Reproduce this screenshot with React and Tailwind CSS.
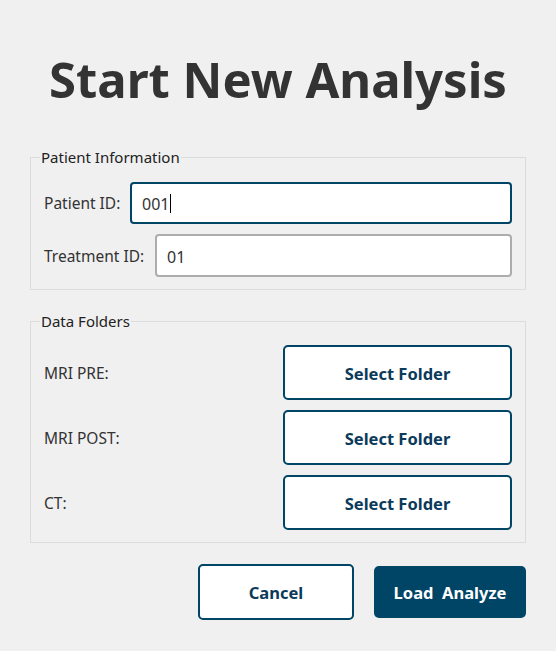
export default function App() {
  const font = { fontFamily: '"Noto Sans", "DejaVu Sans", sans-serif' };
  const btnText = "font-bold text-[16.5px] text-[#0b3a5a] pt-[3px]";
  return (
    <div className="w-[556px] h-[651px] bg-[#f0f0f0] text-[#333333] overflow-hidden" style={font}>
      <div className="flex justify-center pt-[50px] h-[130px]">
        <h1 className="text-[49px] leading-[58px] font-bold text-[#333333]">Start New Analysis</h1>
      </div>

      <fieldset className="mx-[30px] mt-[27px] border border-[#dcdcdc] pl-[13px] pr-[13px] pt-[16px] pb-[12px] relative">
        <legend className="absolute left-[9px] -top-[10px] px-[1px] bg-[#f0f0f0] text-[15px] leading-[19px] text-[#222]">Patient Information</legend>
        <div className="flex items-center h-[42px] mt-[8px]">
          <span className="text-[15.5px] text-[#333] w-[86px] pt-[2px]">Patient ID:</span>
          <div className="flex-1 h-[42px] bg-white border-2 border-[#004466] rounded-[4px] flex items-center pl-[10px] pt-[1px] text-[16px] text-[#333]">
            001<span className="inline-block w-[1px] h-[19px] bg-black ml-[1px]"></span>
          </div>
        </div>
        <div className="flex items-center h-[43px] mt-[10px]">
          <span className="text-[15.5px] text-[#333] w-[111px] pt-[2px]">Treatment ID:</span>
          <div className="flex-1 h-[43px] bg-white border-2 border-[#adadad] rounded-[4px] flex items-center pl-[10px] pt-[2px] text-[16px] text-[#333]">
            01
          </div>
        </div>
      </fieldset>

      <fieldset className="mx-[30px] mt-[31px] border border-[#dcdcdc] pl-[13px] pr-[13px] pt-[23px] pb-[12px] relative">
        <legend className="absolute left-[9px] -top-[10px] px-[1px] bg-[#f0f0f0] text-[15px] leading-[19px] text-[#222]">Data Folders</legend>
        <div className="flex flex-col gap-[10px]">
          {["MRI PRE:", "MRI POST:", "CT:"].map((l) => (
            <div key={l} className="flex items-center justify-between h-[55px]">
              <span className="text-[15.5px] text-[#333] pt-[3px]">{l}</span>
              <button className={`w-[229px] h-[55px] bg-white border-2 border-[#004466] rounded-[5px] ${btnText}`}>Select Folder</button>
            </div>
          ))}
        </div>
      </fieldset>

      <div className="flex justify-end gap-[20px] mr-[30px] mt-[21px] items-center">
        <button className={`w-[156px] h-[56px] bg-white border-2 border-[#004466] rounded-[5px] ${btnText}`}>Cancel</button>
        <button className="w-[152px] h-[52px] bg-[#004466] rounded-[5px] font-bold text-[16.5px] text-white whitespace-pre pt-[3px]">Load  Analyze</button>
      </div>
    </div>
  );
}
